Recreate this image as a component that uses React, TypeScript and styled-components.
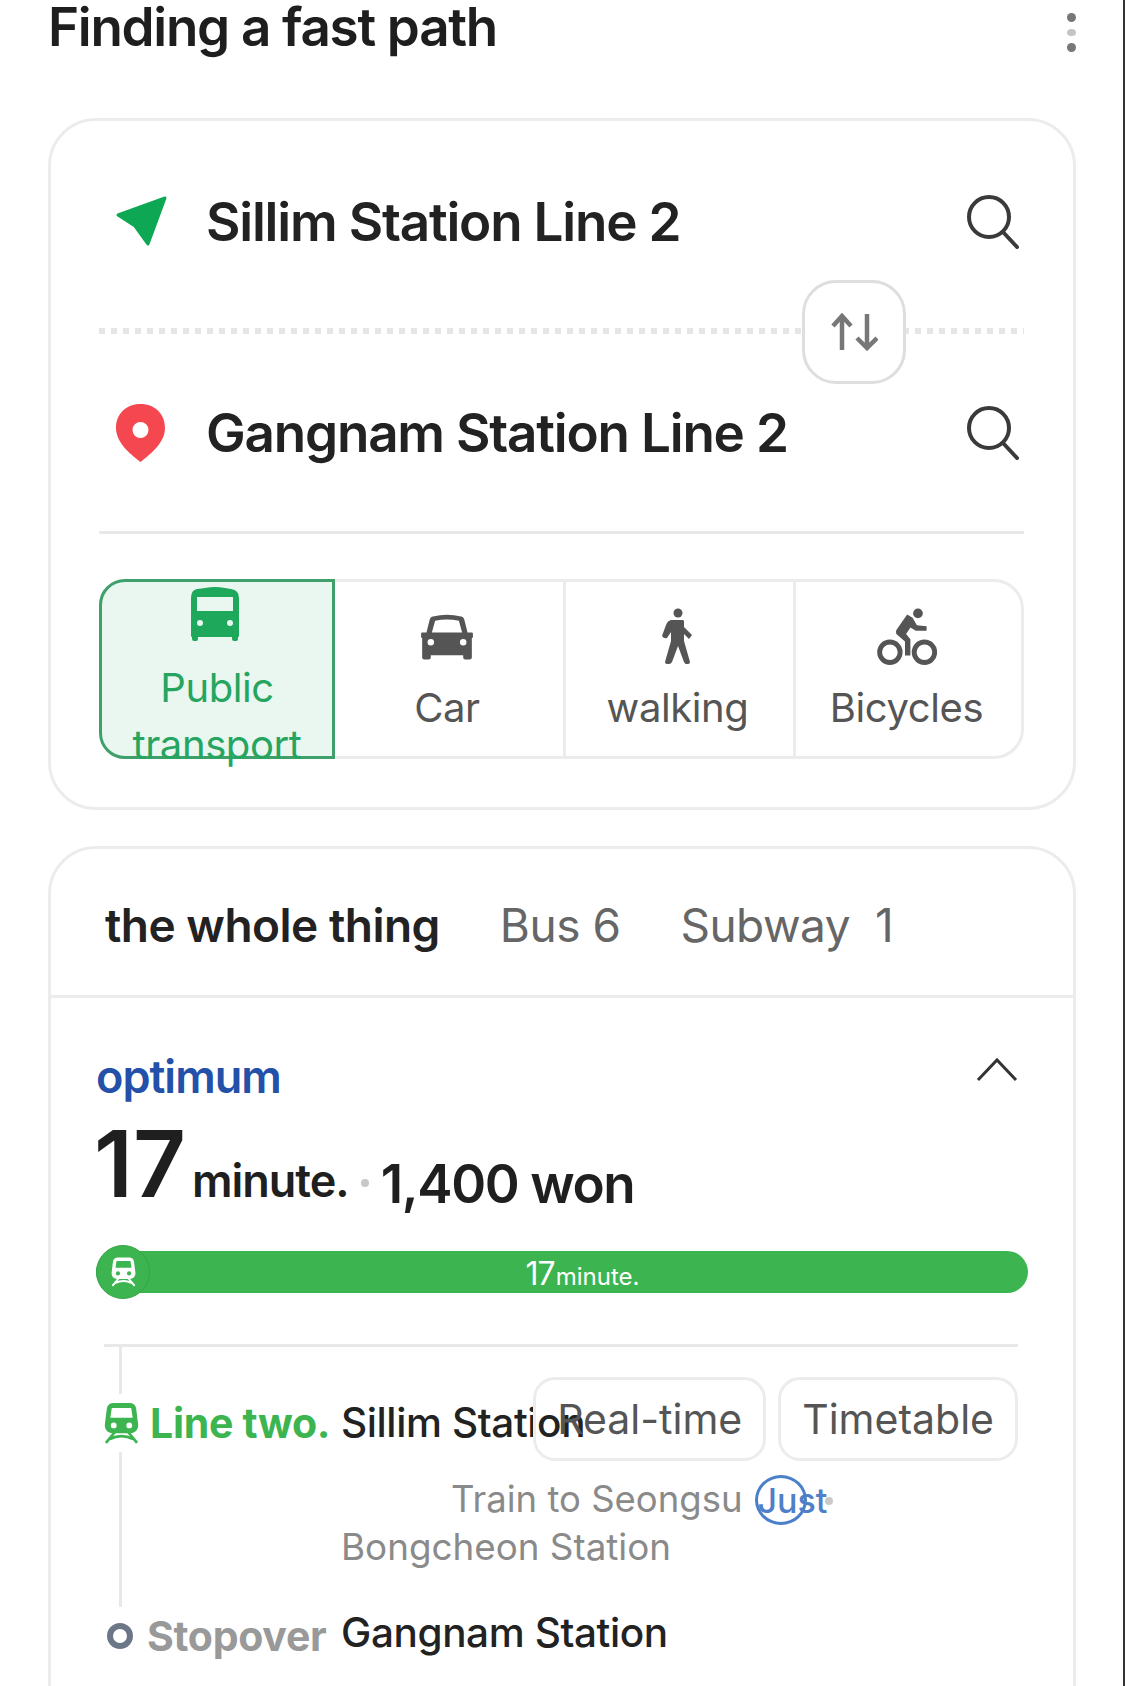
import styled, { createGlobalStyle } from "styled-components";

const GlobalStyle = createGlobalStyle`
  html, body {
    margin: 0;
    padding: 0;
    background: #fff;
    font-family: Inter, "Noto Sans", "Liberation Sans", sans-serif;
    color: #222;
  }
`;

const Page = styled.div`
  box-sizing: border-box;
  width: 1125px;
  height: 1686px;
  overflow: hidden;
  padding: 0 47px 0 48px;
  border-right: 2px solid #333;
`;

const Header = styled.header`
  display: flex;
  justify-content: space-between;
  align-items: flex-start;
  height: 118px;
`;

const Title = styled.h1`
  margin: 0;
  font-size: 53px;
  line-height: 54px;
  font-weight: 600;
  letter-spacing: -1.3px;
  color: #1e1e1e;
`;

const MenuDots = styled.div`
  display: flex;
  flex-direction: column;
  align-items: center;
  gap: 7px;
  margin: 13px 0 0;
`;

const Dot = styled.span<{ $faint?: boolean }>`
  display: block;
  width: 9px;
  height: ${({ $faint }) => ($faint ? "7px" : "9px")};
  border-radius: 50%;
  background: ${({ $faint }) => ($faint ? "#c4c4c4" : "#777")};
`;

const Card = styled.section<{ $open?: boolean }>`
  box-sizing: border-box;
  border: 3px solid #ececec;
  border-radius: 48px;
  padding: ${({ $open }) => ($open ? "0" : "49px 49px 48px 48px")};
  margin-bottom: 36px;
  background: #fff;
`;

const RouteRow = styled.div`
  display: flex;
  align-items: center;
  height: 104px;
`;

const RouteIcon = styled.svg`
  flex: none;
  width: 60px;
  height: 64px;
  margin: 0 36px 0 11px;
`;

const RouteName = styled.div`
  flex: 1;
  font-size: 53px;
  font-weight: 600;
  letter-spacing: -1.2px;
  color: #222;
`;

const SearchIcon = styled.svg`
  flex: none;
  width: 56px;
  height: 56px;
  margin: -2px 3px 0 0;
`;

const Swapper = styled.div`
  box-sizing: border-box;
  position: relative;
  height: 107px;
  padding-top: 6px;
  display: flex;
  align-items: center;
`;

const DottedLine = styled.div`
  width: calc(100% + 2px);
  height: 6px;
  background: repeating-linear-gradient(90deg, #e6e6e6 0 6px, transparent 6px 12px);
`;

const SwapButton = styled.button`
  position: absolute;
  right: 118px;
  top: 6px;
  box-sizing: border-box;
  width: 104px;
  height: 104px;
  display: flex;
  align-items: center;
  justify-content: center;
  padding: 0;
  background: #fff;
  border: 3px solid #dedede;
  border-radius: 34px;
`;

const Rule = styled.div`
  height: 3px;
  background: #e8e8e8;
  margin: 46px 0 45px;
`;

const ModeBar = styled.div`
  display: grid;
  grid-template-columns: 233px 228px 230px 1fr;
  grid-template-rows: 174px;
  box-sizing: border-box;
  height: 180px;
  border: 3px solid #ececec;
  border-radius: 30px;
`;

const Mode = styled.div<{ $active?: boolean }>`
  box-sizing: border-box;
  display: flex;
  flex-direction: column;
  align-items: center;
  justify-content: ${({ $active }) => ($active ? "flex-start" : "center")};
  gap: ${({ $active }) => ($active ? "15px" : "13px")};
  min-width: 0;
  min-height: 0;
  padding: 3px 4px 0 0;
  font-size: 40px;
  line-height: 57px;
  letter-spacing: -0.4px;
  color: ${({ $active }) => ($active ? "#25a55f" : "#555")};
  background: ${({ $active }) => ($active ? "#e9f7f0" : "transparent")};
  border-left: ${({ $active }) => ($active ? "none" : "3px solid #ececec")};
  ${({ $active }) =>
    $active
      ? `
    margin: -3px 0 -3px -3px;
    border: 3px solid #3fa06c;
    border-radius: 26px 0 0 26px;
    padding: 2px 0 0;
    text-align: center;
  `
      : ""}
  &:nth-child(2) {
    border-left: none;
  }
`;

const ModeIcon = styled.svg`
  flex: none;
  width: 60px;
  height: 60px;
`;

const Tabs = styled.div`
  box-sizing: border-box;
  display: flex;
  align-items: center;
  height: 149px;
  padding: 6px 0 0 54px;
  border-bottom: 3px solid #ececec;
  font-size: 46px;
  color: #666;
`;

const TabItem = styled.span<{ $active?: boolean; $gap: number }>`
  margin-right: ${({ $gap }) => $gap}px;
  font-weight: ${({ $active }) => ($active ? 600 : 400)};
  color: ${({ $active }) => ($active ? "#222" : "#666")};
  letter-spacing: -0.5px;
  white-space: pre;
`;

const Body = styled.div`
  padding: 0 45px 220px 45px;
`;

const BestRow = styled.div`
  display: flex;
  justify-content: space-between;
  align-items: center;
  padding-top: 49px;
  height: 58px;
`;

const Best = styled.div`
  font-size: 45px;
  font-weight: 600;
  letter-spacing: -1px;
  color: #2350a8;
`;

const Chevron = styled.svg`
  width: 44px;
  height: 28px;
  margin: -12px 9px 0 0;
`;

const Summary = styled.div`
  display: flex;
  align-items: baseline;
  height: 96px;
  margin-top: 11px;
  font-weight: 600;
  color: #1f1f1f;
  white-space: pre;
`;

const BigNumber = styled.span`
  font-size: 92px;
  line-height: 96px;
  letter-spacing: 0;
  margin: 0 6px 0 -2px;
`;

const Unit = styled.span`
  font-size: 45px;
  letter-spacing: -1px;
`;

const Middot = styled.span`
  display: inline-block;
  width: 8px;
  height: 8px;
  margin: 0 12px;
  border-radius: 50%;
  background: #c8c8c8;
  transform: translateY(-10px);
`;

const Price = styled.span`
  font-size: 53px;
  letter-spacing: -1.4px;
  transform: translateY(6px);
`;

const Bar = styled.div`
  position: relative;
  display: flex;
  align-items: center;
  justify-content: center;
  height: 42px;
  margin-top: 39px;
  border-radius: 21px;
  background: #3cb450;
  color: #fff;
  padding-left: 41px;
`;

const BarBadge = styled.span`
  position: absolute;
  left: 0;
  top: -6px;
  box-sizing: border-box;
  width: 54px;
  height: 54px;
  border-radius: 50%;
  background: #3cb450;
  border: 1px solid #37a549;
  display: flex;
  align-items: center;
  justify-content: center;
`;

const BarLabel = styled.span`
  font-size: 32px;
  letter-spacing: -1px;
  transform: translateY(1px);
  small {
    font-size: 24px;
    letter-spacing: 0;
    margin-left: 1px;
  }
`;

const Timeline = styled.div`
  position: relative;
  margin: 51px 10px 0 8px;
  padding-top: 30px;
  border-top: 3px solid #e8e8e8;
  &::before {
    content: "";
    position: absolute;
    left: 15px;
    top: 0;
    bottom: 15px;
    width: 3px;
    background: #e8e8e8;
  }
`;

const Stop = styled.div<{ $top?: number }>`
  position: relative;
  display: grid;
  grid-template-columns: 237px 1fr;
  align-items: start;
  padding-top: ${({ $top }) => $top ?? 0}px;
`;

const StopMark = styled.div<{ $top?: number }>`
  display: flex;
  align-items: center;
  gap: 11px;
  margin-top: ${({ $top }) => $top ?? 0}px;
  background: #fff;
  font-size: 41px;
  line-height: 58px;
  font-weight: 700;
  letter-spacing: -0.3px;
  white-space: nowrap;
`;

const LineName = styled.span`
  color: #3cb450;
`;

const TransferName = styled.span`
  color: #999;
  margin-left: -2px;
`;

const StationRow = styled.div`
  display: flex;
  justify-content: flex-end;
  align-items: center;
  gap: 12px;
`;

const Station = styled.div<{ $top?: number }>`
  flex: 1;
  width: 0;
  min-width: 0;
  margin-top: ${({ $top }) => $top ?? 0}px;
  font-size: 40.5px;
  line-height: 58px;
  font-weight: 500;
  letter-spacing: -0.4px;
  color: #222;
  white-space: nowrap;
`;

const Action = styled.button`
  box-sizing: border-box;
  flex: none;
  height: 84px;
  padding: 0 21px;
  font-family: inherit;
  font-size: 41px;
  color: #555;
  background: transparent;
  border: 3px solid #ececec;
  border-radius: 22px;
`;

const Direction = styled.div`
  display: flex;
  align-items: center;
  margin-top: 14px;
  padding-left: 110px;
  font-size: 36.5px;
  line-height: 48px;
  color: #8a8a8a;
  white-space: pre;
`;

const Just = styled.span`
  position: relative;
  top: 2px;
  margin-left: 15px;
  font-size: 34px;
  color: #4f7fc8;
  font-weight: 500;
  &::before {
    content: "";
    position: absolute;
    left: -3px;
    top: -2px;
    box-sizing: border-box;
    width: 52px;
    height: 50px;
    border: 3px solid #4a7fc9;
    border-radius: 50%;
  }
  &::after {
    content: "";
    position: absolute;
    right: -6px;
    top: 20px;
    width: 8px;
    height: 8px;
    background: #c9c9c9;
    border-radius: 50%;
  }
`;

const Terminal = styled.div`
  font-size: 36.8px;
  line-height: 48px;
  color: #8a8a8a;
  white-space: nowrap;
`;

const Ring = styled.span`
  box-sizing: border-box;
  flex: none;
  width: 26px;
  height: 26px;
  margin: 0 5px 0 3px;
  border: 6px solid #6b7787;
  border-radius: 50%;
`;

const TrainSvg = styled.svg<{ $w: number; $h: number }>`
  flex: none;
  width: ${({ $w }) => $w}px;
  height: ${({ $h }) => $h}px;
`;

const Search = () => (
  <SearchIcon viewBox="0 0 56 56" fill="none" stroke="#3a3a3a" strokeWidth="4" strokeLinecap="round">
    <circle cx="24" cy="24" r="20" />
    <path d="M38 39 L52 54" />
  </SearchIcon>
);

const TrainGlyph = ({ w, h, color }: { w: number; h: number; color: string }) => (
  <TrainSvg $w={w} $h={h} viewBox="0 0 36 42" fill="none">
    <path
      fillRule="evenodd"
      fill={color}
      d="M10 0h16c4 0 6 2 7 5l2 16c1 6-3 10-8 10H9c-5 0-9-4-8-10L3 5c1-3 3-5 7-5zM8 5L6.5 15h23L28 5zM10 20a3 3 0 1 0 0 6a3 3 0 1 0 0-6zM26 20a3 3 0 1 0 0 6a3 3 0 1 0 0-6z"
    />
    <path d="M11 30L2 41M25 30l9 11M6 37Q18 31 30 37" stroke={color} strokeWidth="2.8" />
  </TrainSvg>
);

const App = () => (
  <Page>
    <GlobalStyle />
    <Header>
      <Title>Finding a fast path</Title>
      <MenuDots>
        <Dot />
        <Dot $faint />
        <Dot />
      </MenuDots>
    </Header>

    <Card>
      <RouteRow>
        <RouteIcon viewBox="0 0 60 64">
          <path
            d="M8 25 L55 8 L38 54 L25 36 Z"
            fill="#0ea855"
            stroke="#0ea855"
            strokeWidth="3"
            strokeLinejoin="round"
          />
        </RouteIcon>
        <RouteName>Sillim Station Line 2</RouteName>
        <Search />
      </RouteRow>
      <Swapper>
        <DottedLine />
        <SwapButton aria-label="swap">
          <svg width="48" height="38" viewBox="0 0 48 38" fill="none" stroke="#777" strokeWidth="4.5">
            <path d="M12 37V3M3 13L12 3l9 10" />
            <path d="M37 1v34M27 25l10 10 10-10" />
          </svg>
        </SwapButton>
      </Swapper>
      <RouteRow>
        <RouteIcon viewBox="0 0 60 64">
          <path
            fillRule="evenodd"
            fill="#f4474f"
            d="M30.5 3C45 3 55 13 55 27C55 41 42 52 30.5 61C19 52 6 41 6 27C6 13 16 3 30.5 3zM30.5 21a8 8 0 1 0 0 16a8 8 0 1 0 0-16z"
          />
        </RouteIcon>
        <RouteName>Gangnam Station Line 2</RouteName>
        <Search />
      </RouteRow>
      <Rule />
      <ModeBar>
        <Mode $active>
          <ModeIcon viewBox="0 0 60 60">
            <path
              transform="translate(-2 0)"
              fillRule="evenodd"
              fill="#1ea85c"
              d="M12 5Q12 5 20 4Q30 2 40 4L46 5Q54 6 54 14V52Q54 53 53 53V55Q53 57 51 57H49Q47 57 47 55V53H13V55Q13 57 11 57H9Q7 57 7 55V53Q6 53 6 52V14Q6 6 12 5zM12 13V27H48V13zM15 36a3 3 0 1 0 0 6a3 3 0 1 0 0-6zM45 36a3 3 0 1 0 0 6a3 3 0 1 0 0-6z"
            />
          </ModeIcon>
          <div>Public transport</div>
        </Mode>
        <Mode>
          <ModeIcon viewBox="0 0 60 60">
            <path
              transform="translate(-2.4 -1.5) scale(1.08)"
              fillRule="evenodd"
              fill="#555"
              d="M17 11Q30 8 43 11Q45 11 46 14L49 26H53Q54 26 54 27V30Q54 31 53 31V49Q53 51 51 51H47Q45 51 45 49V47H15V49Q15 51 13 51H9Q7 51 7 49V31Q6 31 6 30V27Q6 26 7 26H11L14 14Q15 11 17 11zM19 15L16 26H44L41 15Q30 13 19 15zM15 32a3 3 0 1 0 0 6a3 3 0 1 0 0-6zM45 32a3 3 0 1 0 0 6a3 3 0 1 0 0-6z"
            />
          </ModeIcon>
          <div>Car</div>
        </Mode>
        <Mode>
          <ModeIcon viewBox="0 0 60 60">
            <g transform="translate(15 2)">
              <circle cx="15" cy="5" r="4.5" fill="#555" />
              <path
                fill="#555"
                d="M9 12H20Q21 12 21 14V19L29 27L26 31L21 26V33L27 54Q27 56 25 56H23Q22 56 21 54L15 38L9 54Q8 56 6 56H4Q2 56 2 54L8 33V24L4 30Q1 31 -1 28L3 17Q5 12 9 12Z"
              />
            </g>
          </ModeIcon>
          <div>walking</div>
        </Mode>
        <Mode>
          <ModeIcon viewBox="0 0 60 60">
            <g transform="translate(1 2) scale(1.08)">
              <circle cx="37" cy="5" r="4.5" fill="#555" />
              <path
                fill="#555"
                d="M27 6L32 9L36 16L45 17V21H35L30 18L26 24L30 29V44H25V31L17 24Q16 21 18 19Z"
              />
              <circle cx="11" cy="41" r="9.5" fill="none" stroke="#555" strokeWidth="4.5" />
              <circle cx="43" cy="41" r="9.5" fill="none" stroke="#555" strokeWidth="4.5" />
            </g>
          </ModeIcon>
          <div>Bicycles</div>
        </Mode>
      </ModeBar>
    </Card>

    <Card $open>
      <Tabs>
        <TabItem $active $gap={60}>the whole thing</TabItem>
        <TabItem $gap={60}>Bus 6</TabItem>
        <TabItem $gap={0}>{"Subway  1"}</TabItem>
      </Tabs>
      <Body>
        <BestRow>
          <Best>optimum</Best>
          <Chevron viewBox="0 0 44 28" fill="none" stroke="#333" strokeWidth="3">
            <path d="M3 24L22 4l19 20" />
          </Chevron>
        </BestRow>
        <Summary>
          <BigNumber>17</BigNumber>
          <Unit>minute.</Unit>
          <Middot />
          <Price>1,400 won</Price>
        </Summary>
        <Bar>
          <BarBadge>
            <TrainGlyph w={25} h={30} color="#fff" />
          </BarBadge>
          <BarLabel>
            17<small>minute.</small>
          </BarLabel>
        </Bar>
        <Timeline>
          <Stop>
            <StopMark $top={17}>
              <TrainGlyph w={35} h={41} color="#3cb450" />
              <LineName>Line two.</LineName>
            </StopMark>
            <StationRow>
              <Station $top={8}>Sillim Station</Station>
              <Action>Real-time</Action>
              <Action>Timetable</Action>
            </StationRow>
          </Stop>
          <Stop>
            <div />
            <div>
              <Direction>
                Train to Seongsu
                <Just>Just</Just>
              </Direction>
              <Terminal>Bongcheon Station</Terminal>
            </div>
          </Stop>
          <Stop $top={34}>
            <StopMark $top={2}>
              <Ring />
              <TransferName>Stopover</TransferName>
            </StopMark>
            <Station $top={-1}>Gangnam Station</Station>
          </Stop>
        </Timeline>
      </Body>
    </Card>
  </Page>
);

export default App;
